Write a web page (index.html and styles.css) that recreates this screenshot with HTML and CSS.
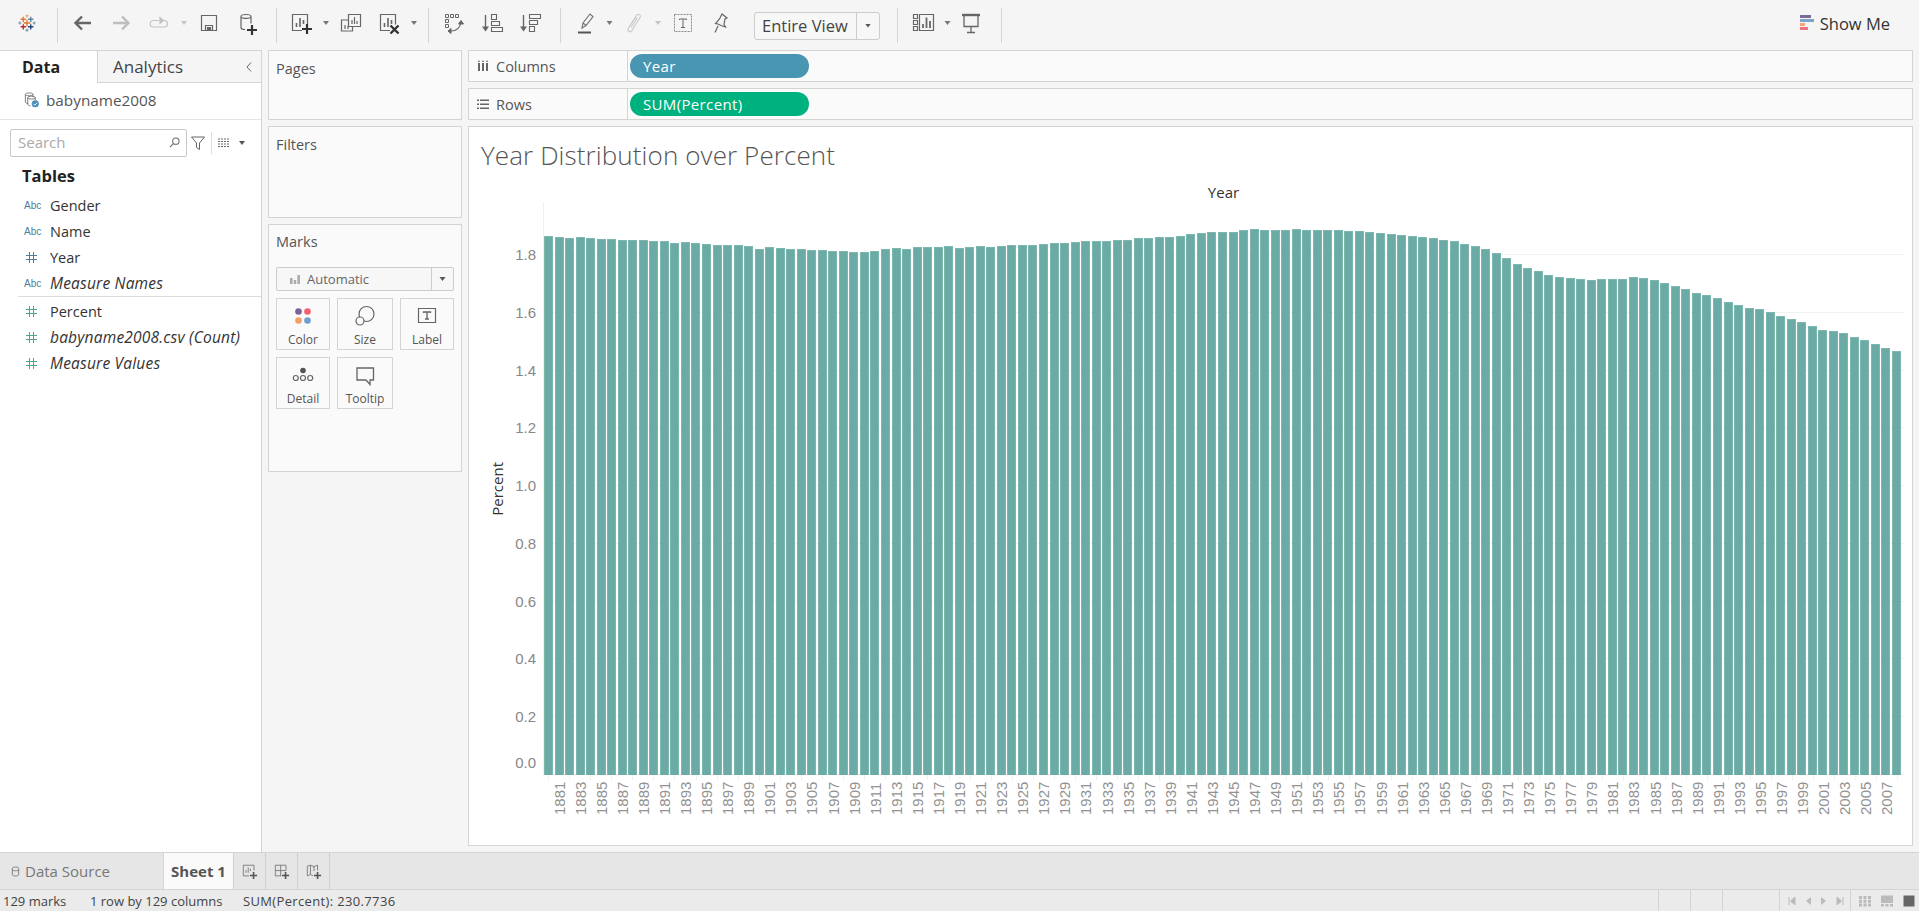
FILE: index.html
```html
<!DOCTYPE html>
<html>
<head>
  <title>Tableau - Sheet 1</title>
  <link rel="stylesheet" href="styles.css">
</head>
<body>
  <header class="toolbar">
    <div class="tb-group g-logo">
      <svg class="logo" viewBox="0 0 24 24" fill="none" stroke-width="1.500">
        <path d="M12 7.500v9M7.500 12h9" stroke="#e8762d" stroke-width="1.800"/>
        <path d="M7 3.500v7M3.500 7h7" stroke="#e8762d" stroke-width="1.800"/>
        <path d="M17 3.500v7M13.500 7h7" stroke="#59879b" stroke-width="1.800"/>
        <path d="M7 13.500v7M3.500 17h7" stroke="#c72035" stroke-width="1.800"/>
        <path d="M17 13.500v7M13.500 17h7" stroke="#1f447b" stroke-width="1.800"/>
        <path d="M12 .5v4M10 2.500h4" stroke="#e8a070"/>
        <path d="M12 19.500v4M10 21.500h4" stroke="#7099a6"/>
        <path d="M2.500 10v4M.5 12h4" stroke="#7099a6"/>
        <path d="M21.500 10v4M19.500 12h4" stroke="#7099a6"/>
      </svg>
    </div>
    <div class="tb-group g-nav">
      <span class="btn"><svg class="ico" viewBox="0 0 24 24" fill="none" stroke="#666" stroke-width="2.400"><path d="M20 12H5M11 5.500L4.500 12l6.500 6.500"/></svg></span>
      <span class="btn"><svg class="ico" viewBox="0 0 24 24" fill="none" stroke="#bdbdbd" stroke-width="2.400"><path d="M4 12h15M13 5.500l6.500 6.500-6.500 6.500"/></svg></span>
      <span class="btn"><svg class="ico" viewBox="0 0 24 24" fill="none" stroke="#c4c4c4" stroke-width="1.200"><path d="M12 9.500H6.500a3 3 0 0 0 0 6.500h11a3 3 0 0 0 3-3.200c0-1.800-1.300-3.300-3-3.300H16"/><path d="M13 6.500v6l3.500-3z" fill="#c4c4c4"/></svg></span>
      <span class="caret off"></span>
      <span class="btn"><svg class="ico" viewBox="0 0 24 24" fill="none" stroke="#666" stroke-width="1.200"><path d="M4.500 4.500h15v15h-15z"/><path d="M8.500 19.500v-5h7v5"/><path d="M10.500 19.500v-3h3v3z" fill="#666"/></svg></span>
      <span class="btn"><svg class="ico" viewBox="0 0 24 24" fill="none" stroke="#666" stroke-width="1.200"><path d="M6 5.500c0-2.700 10-2.700 10 0v7M6 5.500c0 2.500 10 2.500 10 0M6 5.500v11c0 1.500 2 2 4 2"/><path d="M12 19h10M17 14v10" stroke="#333" stroke-width="2.200"/></svg></span>
    </div>
    <div class="tb-group g-sheet">
      <span class="btn"><svg class="ico" viewBox="0 0 24 24" fill="none" stroke="#666" stroke-width="1.200"><path d="M13 19.500H3.500v-16h15v10"/><path d="M7.500 16v-4M11 16V7M14.500 13V9" stroke-width="1.600"/><path d="M13 18h10M18 13v10" stroke="#333" stroke-width="2.200"/></svg></span>
      <span class="caret"></span>
      <span class="btn"><svg class="ico" viewBox="0 0 24 24" fill="none" stroke="#666" stroke-width="1.200"><path d="M9.500 3.500h12v12h-12z"/><path d="M9 9H2.500v11h11v-4"/><path d="M13 13V9M15.500 13V6M18 13v-3M6 18v-4M9 18v-3"/></svg></span>
      <span class="btn"><svg class="ico" viewBox="0 0 24 24" fill="none" stroke="#666" stroke-width="1.200"><path d="M13 19.500H3.500v-16h15v10"/><path d="M7.500 16v-4M11 16V7M14.500 13V9" stroke-width="1.600"/><path d="M13.500 14.500l8 8M21.500 14.500l-8 8" stroke="#333" stroke-width="2.400"/></svg></span>
      <span class="caret"></span>
    </div>
    <div class="tb-group g-sort">
      <span class="btn"><svg class="ico" viewBox="0 0 24 24" fill="none" stroke="#666" stroke-width="1"><path d="M3.500 3.500h3v3h-3zM8.500 3.500h3v3h-3zM13.500 3.500h3v3h-3zM3.500 8.500h3v3h-3zM3.500 13.500h3v3h-3z"/><path d="M9 20c5 0 9-3 10-9" stroke-width="1.200"/><path d="M16.500 13l2.500-3.500 2.500 3.500zM9 17.500v5l-3-2.500z" fill="#666"/></svg></span>
      <span class="btn"><svg class="ico" viewBox="0 0 24 24" fill="none" stroke="#666" stroke-width="1.100"><path d="M5.500 4v15" stroke-width="1.400"/><path d="M2 15.500l3.500 5 3.500-5z" fill="#666" stroke="none"/><path d="M11.500 3.500h5v5h-5zM11.500 10.500h8v4h-8zM11.500 16.500h11v4h-11z"/></svg></span>
      <span class="btn"><svg class="ico" viewBox="0 0 24 24" fill="none" stroke="#666" stroke-width="1.100"><path d="M5.500 4v15" stroke-width="1.400"/><path d="M2 15.500l3.500 5 3.500-5z" fill="#666" stroke="none"/><path d="M11.500 3.500h11v4h-11zM11.500 9.500h8v4h-8zM11.500 15.500h5v5h-5z"/></svg></span>
    </div>
    <div class="tb-group g-format">
      <span class="btn"><svg class="ico" viewBox="0 0 24 24" fill="none" stroke="#777" stroke-width="1.200"><path d="M8 17l1-5 7-9 3 2.500-7 9z"/><path d="M9 12l3 2.500"/><path d="M4 21.500h13" stroke="#555" stroke-width="2"/></svg></span>
      <span class="caret narrow"></span>
      <span class="btn"><svg class="ico" viewBox="0 0 24 24" fill="none" stroke="#c8c8c8" stroke-width="1.100"><path d="M8 16L15.500 4.500c1.800-2.500 5-.5 3.500 2L11 19.500c-1.500 2.500-5 1-3.800-2L14 7.500c.7-1 2-.3 1.500.7L10 16.500"/></svg></span>
      <span class="caret off"></span>
      <span class="btn"><svg class="ico" viewBox="0 0 24 24" fill="none" stroke="#888" stroke-width="1"><path d="M3.500 3.500h17v17h-17z" stroke-dasharray="2 1"/><path d="M8.500 9V8h7v1M12 8v8.500M10 16.500h4" stroke="#666"/></svg></span>
      <span class="btn"><svg class="ico" viewBox="0 0 24 24" fill="none" stroke="#666" stroke-width="1.200"><path d="M13 3l5 4-2 1-1 5.500 1.500 2.500-4.500-1.500-3-1.500-2.500-.5 4-4.500z"/><path d="M9 15l-3 6.500"/></svg></span>
      <div class="fit-select">
        <span class="fit-text">Entire View</span>
        <span class="fit-arrow"><span class="caret dark"></span></span>
      </div>
    </div>
    <div class="tb-group g-show">
      <span class="btn"><svg class="ico" viewBox="0 0 24 24" fill="none" stroke="#666" stroke-width="1.200"><path d="M1.500 3.500h4v4h-4zM1.500 9.500h4v4h-4zM1.500 15.500h4v4h-4zM7.500 3.500h14v16h-14z"/><path d="M11 17v-4M14.500 17V6.500M18 17v-7" stroke-width="1.800"/></svg></span>
      <span class="caret narrow"></span>
      <span class="btn"><svg class="ico" viewBox="0 0 24 24" fill="none" stroke="#666" stroke-width="1.300"><path d="M3 4h18" stroke-width="2.400"/><path d="M5 4.500v11h14v-11M12 15.500v6M8 21.500h8"/></svg></span>
    </div>
    <div class="show-me">
      <svg class="show-ico" viewBox="0 0 14 16">
        <rect x="0" y="0" width="11" height="3" fill="#7b6b98"/>
        <rect x="0" y="4" width="14" height="3" fill="#7ba3cc"/>
        <rect x="0" y="8" width="5" height="3" fill="#f2a477"/>
        <rect x="0" y="12" width="8" height="3" fill="#f5707e"/>
      </svg>
      Show Me
    </div>
  </header>

  <main class="workspace">
    <aside class="data-pane">
      <div class="pane-tabs">
        <div class="pane-tab active">Data</div>
        <div class="pane-tab">Analytics<svg class="collapse" viewBox="0 0 8 12" fill="none" stroke="#666"><path d="M6 1.500L2 6l4 4.500"/></svg></div>
      </div>
      <div class="source-row">
        <svg class="source-ico" viewBox="0 0 18 18" fill="none" stroke="#777"><path d="M2.500 3c0-2 8-2 8 0v3M2.500 3c0 2 8 2 8 0M2.500 3v8c0 1 1 1.500 3 1.800"/><path d="M5 6.500c0-2 8-2 8 0v3M5 6.500c0 2 8 2 8 0M5 6.500v7c0 1 1.500 1.500 3 1.800"/><circle cx="13" cy="13" r="3.800" fill="#4b8eb8" stroke="none"/><path d="M11 13l1.500 1.500L15 12" stroke="#fff"/></svg>
        babyname2008
      </div>
      <div class="search-row">
        <div class="search-box">
          <span>Search</span>
          <svg class="search-ico" viewBox="0 0 12 12" fill="none" stroke="#666" stroke-width="1.100"><circle cx="7.500" cy="4.500" r="3.500"/><path d="M5 7l-4 4"/></svg>
        </div>
        <svg class="filter-ico" viewBox="0 0 14 14" fill="none" stroke="#666"><path d="M.5 1h13L8.500 7v6.500l-3-2V7z"/></svg>
        <span class="vsep"></span>
        <svg class="list-ico" viewBox="0 0 12 10" fill="none" stroke="#666"><path d="M0 1h12M0 3.500h12M0 6h12M0 8.500h12" stroke-dasharray="2 1"/></svg>
        <span class="caret dark"></span>
      </div>
      <h3 class="tables-head">Tables</h3>
      <ul class="field-list">
        <li class="field"><span class="type abc">Abc</span>Gender</li>
        <li class="field"><span class="type abc">Abc</span>Name</li>
        <li class="field"><svg class="hash" viewBox="0 0 11 11" fill="none" stroke="#4a7f9c"><path d="M3.500 0v11M7.500 0v11M0 3.500h11M0 7.500h11"/></svg>Year</li>
        <li class="field calc"><span class="type abc">Abc</span>Measure Names</li>
      </ul>
      <ul class="field-list measures">
        <li class="field"><svg class="hash" viewBox="0 0 11 11" fill="none" stroke="#4ea58c"><path d="M3.500 0v11M7.500 0v11M0 3.500h11M0 7.500h11"/></svg>Percent</li>
        <li class="field calc"><svg class="hash" viewBox="0 0 11 11" fill="none" stroke="#4ea58c"><path d="M3.500 0v11M7.500 0v11M0 3.500h11M0 7.500h11"/></svg>babyname2008.csv (Count)</li>
        <li class="field calc"><svg class="hash" viewBox="0 0 11 11" fill="none" stroke="#4ea58c"><path d="M3.500 0v11M7.500 0v11M0 3.500h11M0 7.500h11"/></svg>Measure Values</li>
      </ul>
    </aside>

    <section class="cards">
      <div class="card pages">Pages</div>
      <div class="card filters">Filters</div>
      <div class="card marks">
        <div class="marks-title">Marks</div>
        <div class="mark-type">
          <svg class="auto-ico" viewBox="0 0 10 10"><path d="M0 4h2.500v6H0zM3.700 6h2.500v4H3.700zM7.400 1h2.500v9H7.400z" fill="#aaa"/></svg>
          <span class="mark-name">Automatic</span>
          <span class="mark-arrow"><span class="caret dark"></span></span>
        </div>
        <div class="mark-grid">
          <div class="mark-btn">
            <svg class="ico" viewBox="0 0 24 24"><circle cx="7.500" cy="7.500" r="3.300" fill="#7b6495"/><circle cx="16.500" cy="7.500" r="3.300" fill="#f2606e"/><circle cx="7.500" cy="16.500" r="3.300" fill="#f2a066"/><circle cx="16.500" cy="16.500" r="3.300" fill="#6e9fd0"/></svg>
            Color
          </div>
          <div class="mark-btn">
            <svg class="ico" viewBox="0 0 24 24" fill="none" stroke="#666" stroke-width="1.200"><circle cx="13.500" cy="10" r="7.500"/><circle cx="7" cy="17" r="4" fill="#fafafa"/></svg>
            Size
          </div>
          <div class="mark-btn">
            <svg class="ico" viewBox="0 0 24 24" fill="none" stroke="#666" stroke-width="1.200"><path d="M3.500 4.500h17v14h-17z"/><path d="M8.500 9V8h7v1M12 8v7M10 15h4" stroke-width="1.300"/></svg>
            Label
          </div>
          <div class="mark-btn">
            <svg class="ico" viewBox="0 0 24 24" fill="none" stroke="#666" stroke-width="1.200"><circle cx="12" cy="7.500" r="2.800" fill="#555" stroke="none"/><circle cx="4.800" cy="15" r="2.500"/><circle cx="12" cy="15" r="2.500"/><circle cx="19.200" cy="15" r="2.500"/></svg>
            Detail
          </div>
          <div class="mark-btn">
            <svg class="ico" viewBox="0 0 24 24" fill="none" stroke="#666" stroke-width="1.300"><path d="M4 5h16.500v12h-3.500v4.500l-4-4.500H4z"/></svg>
            Tooltip
          </div>
        </div>
      </div>
    </section>

    <section class="sheet">
      <div class="shelf">
        <div class="shelf-name"><svg class="shelf-ico" viewBox="0 0 12 12"><path d="M1 3h2v8H1zM5 3h2v8H5zM9 3h2v8H9zM1 .8h2v1H1zM5 .8h2v1H5zM9 .8h2v1H9z" fill="#666"/></svg>Columns</div>
        <div class="pill blue">Year</div>
      </div>
      <div class="shelf">
        <div class="shelf-name"><svg class="shelf-ico" viewBox="0 0 12 12"><path d="M0 1.500h2v1.500H0zM3 1.500h9v1.500H3zM0 5.500h2v1.500H0zM3 5.500h9v1.500H3zM0 9.500h2v1.500H0zM3 9.500h9v1.500H3z" fill="#666"/></svg>Rows</div>
        <div class="pill green">SUM(Percent)</div>
      </div>
      <div class="view">
        <h1 class="view-title">Year Distribution over Percent</h1>
        <div class="x-title">Year</div>
        <div class="chart">
          <div class="y-title"><span>Percent</span></div>
          <div class="y-axis">
            <span>1.8</span><span>1.6</span><span>1.4</span><span>1.2</span><span>1.0</span><span>0.8</span><span>0.6</span><span>0.4</span><span>0.2</span><span class="zero">0.0</span>
          </div>
          <div class="plot-col">
            <div class="plot">
              <div class="bars">
                <i style="height:539px"></i><i style="height:538px"></i><i style="height:537px"></i><i style="height:538px"></i><i style="height:537px"></i><i style="height:536px"></i><i style="height:536px"></i><i style="height:535px"></i><i style="height:535px"></i><i style="height:535px"></i><i style="height:534px"></i><i style="height:534px"></i><i style="height:532px"></i><i style="height:533px"></i><i style="height:532px"></i><i style="height:531px"></i><i style="height:530px"></i><i style="height:530px"></i><i style="height:530px"></i><i style="height:529px"></i><i style="height:526px"></i><i style="height:528px"></i><i style="height:527px"></i><i style="height:526px"></i><i style="height:526px"></i><i style="height:525px"></i><i style="height:525px"></i><i style="height:524px"></i><i style="height:524px"></i><i style="height:523px"></i><i style="height:523px"></i><i style="height:524px"></i><i style="height:526px"></i><i style="height:527px"></i><i style="height:526px"></i><i style="height:528px"></i><i style="height:528px"></i><i style="height:528px"></i><i style="height:529px"></i><i style="height:527px"></i><i style="height:528px"></i><i style="height:529px"></i><i style="height:528px"></i><i style="height:529px"></i>
                <i style="height:530px"></i><i style="height:530px"></i><i style="height:530px"></i><i style="height:531px"></i><i style="height:532px"></i><i style="height:532px"></i><i style="height:533px"></i><i style="height:534px"></i><i style="height:534px"></i><i style="height:534px"></i><i style="height:535px"></i><i style="height:535px"></i><i style="height:537px"></i><i style="height:537px"></i><i style="height:538px"></i><i style="height:538px"></i><i style="height:539px"></i><i style="height:541px"></i><i style="height:542px"></i><i style="height:543px"></i><i style="height:543px"></i><i style="height:543px"></i><i style="height:545px"></i><i style="height:546px"></i><i style="height:545px"></i><i style="height:545px"></i><i style="height:545px"></i><i style="height:546px"></i><i style="height:545px"></i><i style="height:545px"></i><i style="height:545px"></i><i style="height:545px"></i><i style="height:544px"></i><i style="height:544px"></i><i style="height:543px"></i><i style="height:542px"></i><i style="height:541px"></i><i style="height:540px"></i><i style="height:539px"></i><i style="height:538px"></i><i style="height:537px"></i><i style="height:535px"></i><i style="height:534px"></i>
                <i style="height:531px"></i><i style="height:529px"></i><i style="height:526px"></i><i style="height:522px"></i><i style="height:517px"></i><i style="height:511px"></i><i style="height:507px"></i><i style="height:504px"></i><i style="height:500px"></i><i style="height:498px"></i><i style="height:497px"></i><i style="height:496px"></i><i style="height:495px"></i><i style="height:496px"></i><i style="height:496px"></i><i style="height:496px"></i><i style="height:498px"></i><i style="height:497px"></i><i style="height:495px"></i><i style="height:492px"></i><i style="height:489px"></i><i style="height:486px"></i><i style="height:482px"></i><i style="height:480px"></i><i style="height:477px"></i><i style="height:473px"></i><i style="height:470px"></i><i style="height:467px"></i><i style="height:466px"></i><i style="height:463px"></i><i style="height:459px"></i><i style="height:456px"></i><i style="height:453px"></i><i style="height:449px"></i><i style="height:445px"></i><i style="height:444px"></i><i style="height:442px"></i><i style="height:438px"></i><i style="height:435px"></i><i style="height:431px"></i><i style="height:427px"></i><i style="height:424px"></i>
              </div>
            </div>
            <div class="ticks"></div>
            <div class="x-axis">
              <span>1881</span><span>1883</span><span>1885</span><span>1887</span><span>1889</span><span>1891</span><span>1893</span><span>1895</span><span>1897</span><span>1899</span><span>1901</span><span>1903</span><span>1905</span><span>1907</span><span>1909</span><span>1911</span><span>1913</span><span>1915</span><span>1917</span><span>1919</span><span>1921</span><span>1923</span><span>1925</span><span>1927</span><span>1929</span><span>1931</span><span>1933</span><span>1935</span><span>1937</span><span>1939</span><span>1941</span><span>1943</span><span>1945</span><span>1947</span><span>1949</span><span>1951</span><span>1953</span><span>1955</span><span>1957</span><span>1959</span><span>1961</span><span>1963</span><span>1965</span><span>1967</span><span>1969</span><span>1971</span><span>1973</span><span>1975</span><span>1977</span><span>1979</span><span>1981</span><span>1983</span><span>1985</span><span>1987</span><span>1989</span><span>1991</span><span>1993</span><span>1995</span><span>1997</span><span>1999</span><span>2001</span><span>2003</span><span>2005</span><span>2007</span>
            </div>
          </div>
        </div>
      </div>
    </section>
  </main>

  <nav class="sheet-tabs">
    <div class="tab source-tab">
      <svg class="tab-cyl" viewBox="0 0 10 12" fill="none" stroke="#777"><path d="M1.500 2.500c0-2 7-2 7 0v7c0 2-7 2-7 0zM1.500 4c0 1.500 7 1.500 7 0"/></svg>
      Data Source
    </div>
    <div class="tab current">Sheet 1</div>
    <div class="tab add"><svg class="ico-add" viewBox="0 0 18 18" fill="none" stroke="#777"><path d="M8 14.500H1.500v-12h12v6"/><path d="M4.500 11V8M7 11V5M9.500 9V6.500"/><path d="M9 14h8M13 10v8" stroke="#555" stroke-width="1.800"/></svg></div>
    <div class="tab add"><svg class="ico-add" viewBox="0 0 18 18" fill="none" stroke="#777"><path d="M8 14.500H1.500v-12h12v6M1.500 8.500h12M7.500 2.500v12"/><path d="M9 14h8M13 10v8" stroke="#555" stroke-width="1.800"/></svg></div>
    <div class="tab add"><svg class="ico-add" viewBox="0 0 18 18" fill="none" stroke="#777"><path d="M8 14.500l-3-1.500-3.500 1.500v-11L5 2.500l4 1.500 4-1.500v6M5 2.500v10.500M9 4v5"/><path d="M9 14h8M13 10v8" stroke="#555" stroke-width="1.800"/></svg></div>
  </nav>

  <footer class="status">
    <span class="stat s-marks">129 marks</span>
    <span class="stat s-dims">1 row by 129 columns</span>
    <span class="stat s-sum">SUM(Percent): 230.7736</span>
    <div class="stat-cells">
      <span class="cell c1"></span>
      <span class="cell c1"></span>
      <span class="cell c2"></span>
      <span class="cell c3">
        <svg class="nav-ico" viewBox="0 0 8 10"><path d="M1 1v8M7 1L2.500 5 7 9z" fill="#bbb" stroke="#bbb"/></svg>
        <svg class="nav-ico" viewBox="0 0 8 10"><path d="M7 1L2 5l5 4z" fill="#bbb"/></svg>
        <svg class="nav-ico" viewBox="0 0 8 10"><path d="M1 1l5 4-5 4z" fill="#bbb"/></svg>
        <svg class="nav-ico" viewBox="0 0 8 10"><path d="M7 1v8M1 1l4.500 4L1 9z" fill="#bbb" stroke="#bbb"/></svg>
      </span>
      <span class="cell c4">
        <svg class="view-ico" viewBox="0 0 12 12" fill="#bbb"><path d="M0 1h3v3H0zM4.500 1h3v3h-3zM9 1h3v3H9zM0 4.700h3v3H0zM4.500 4.700h3v3h-3zM9 4.700h3v3H9zM0 8.400h3v3H0zM4.500 8.400h3v3h-3zM9 8.400h3v3H9z"/></svg>
        <svg class="view-ico" viewBox="0 0 12 12" fill="#bbb"><path d="M0 .5h12v7.500H0zM0 9h3v2.500H0zM4.500 9h3v2.500h-3zM9 9h3v2.500H9z"/></svg>
        <svg class="view-ico" viewBox="0 0 12 12" fill="#666"><path d="M.5.500h11v11H.5z"/></svg>
      </span>
    </div>
  </footer>
</body>
</html>
```

FILE: styles.css
```css
* {
  box-sizing: border-box;
}
html, body {
  height: 100%;
}
body {
  margin: 0;
  overflow: hidden;
  background: #f5f5f5;
  color: #444;
  font-family: 'Open Sans', 'Liberation Sans', sans-serif;
  font-size: 14px;
}
ul {
  list-style: none;
  margin: 0;
  padding: 0;
}

/* toolbar */
.toolbar {
  display: flex;
  height: 50px;
  padding-top: 8px;
  background: #f5f5f5;
}
.tb-group {
  display: flex;
  align-items: center;
  height: 35px;
  padding-bottom: 5px;
  border-right: 1px solid #d4d4d4;
}
.g-logo { width: 58px; padding-left: 18px; }
.g-nav { padding-left: 6px; padding-right: 10px; }
.g-sheet { padding-left: 5px; padding-right: 8px; }
.g-sort { padding-left: 6px; padding-right: 11px; }
.g-format { padding-left: 6px; padding-right: 17px; }
.g-show { padding-left: 7px; padding-right: 11px; }
.logo {
  display: block;
  width: 18px;
  height: 18px;
}
.ico {
  display: block;
  width: 24px;
  height: 24px;
}
.btn {
  display: flex;
  justify-content: center;
  width: 38px;
}
.caret {
  display: block;
  width: 12px;
  height: 4px;
  background: #777;
  clip-path: polygon(3px 0, 9px 0, 6px 4px);
}
.caret.off { background: #c4c4c4; }
.caret.narrow { width: 9px; clip-path: polygon(1.500px 0, 7.500px 0, 4.500px 4px); }
.caret.dark { background: #555; }
.fit-select {
  display: flex;
  width: 126px;
  height: 28px;
  margin-left: 14px;
  margin-top: 5px;
  background: #f7f7f7;
  border: 1px solid #ccc;
  border-radius: 3px;
  color: #444;
  font-size: 16.500px;
}
.fit-text {
  flex: 1;
  padding-left: 7px;
  line-height: 25px;
  border-right: 1px solid #ccc;
}
.fit-arrow {
  display: flex;
  align-items: center;
  justify-content: center;
  width: 22px;
}
.show-me {
  display: flex;
  align-items: center;
  height: 30px;
  margin-left: auto;
  padding-right: 29px;
  gap: 6px;
  color: #333;
  font-size: 16.500px;
}
.show-ico {
  width: 14px;
  height: 16px;
}

/* main area */
.workspace {
  display: flex;
  height: 802px;
}
.data-pane {
  width: 262px;
  background: #fff;
  border-top: 1px solid #d4d4d4;
  border-right: 1px solid #d4d4d4;
}
.pane-tabs {
  display: flex;
  height: 32px;
}
.pane-tab {
  display: flex;
  flex: 1;
  align-items: center;
  padding-left: 15px;
  background: #f5f5f5;
  border-bottom: 1px solid #d4d4d4;
  border-left: 1px solid #d4d4d4;
  font-size: 17px;
}
.pane-tab.active {
  flex: 0 0 97px;
  padding-left: 22px;
  background: #fff;
  border: 0;
  color: #222;
  font-size: 16px;
  font-weight: 700;
}
.collapse {
  width: 8px;
  height: 12px;
  margin-left: auto;
  margin-right: 8px;
}
.source-row {
  display: flex;
  align-items: center;
  gap: 6px;
  height: 37px;
  padding-left: 23px;
  padding-bottom: 3px;
  border-bottom: 1px solid #e4e4e4;
  font-size: 15.300px;
  color: #555;
}
.source-ico {
  width: 17px;
  height: 18px;
}
.search-row {
  display: flex;
  align-items: center;
  height: 28px;
  margin-top: 9px;
  padding-left: 10px;
}
.search-box {
  display: flex;
  align-items: center;
  justify-content: space-between;
  width: 177px;
  height: 28px;
  padding: 0 6px 2px 7px;
  background: #fff;
  border: 1px solid #c8c8c8;
  border-radius: 2px;
  color: #aaa;
  font-size: 15px;
}
.search-ico {
  width: 11px;
  height: 11px;
}
.filter-ico {
  width: 14px;
  height: 14px;
  margin-left: 4px;
}
.vsep {
  width: 1px;
  height: 22px;
  margin: 0 6px;
  background: #ddd;
}
.list-ico {
  width: 12px;
  height: 10px;
  margin-right: 6px;
}
.tables-head {
  margin: 9px 0 0;
  padding-left: 22px;
  color: #222;
  font-size: 16.500px;
  line-height: 20px;
  font-weight: 700;
}
.field-list {
  margin-top: 6px;
}
.field-list.measures {
  margin: 0 0 0 18px;
  padding-top: 1px;
  border-top: 1px solid #dcdcdc;
}
.field {
  display: flex;
  align-items: center;
  height: 26px;
  padding-left: 24px;
  color: #333;
  font-size: 14.500px;
}
.measures .field {
  padding-left: 6px;
}
.field.calc {
  font-style: italic;
  font-size: 15.500px;
  letter-spacing: 0.200px;
}
.type {
  width: 26px;
  font-style: normal;
  letter-spacing: 0;
  color: #4a7f9c;
  font-size: 10px;
  font-family: 'Liberation Sans', sans-serif;
}
.hash {
  width: 11px;
  height: 11px;
  margin: 0 13px 0 2px;
}

/* pages, filters, marks */
.cards {
  display: flex;
  flex-direction: column;
  gap: 6px;
  width: 194px;
  margin-left: 6px;
}
.card {
  padding: 8px 7px;
  background: #fafafa;
  border: 1px solid #d4d4d4;
  color: #555;
  font-size: 14.500px;
}
.pages { height: 70px; }
.filters { height: 92px; }
.marks { height: 248px; }
.marks-title {
  line-height: 18px;
}
.mark-type {
  display: flex;
  align-items: center;
  height: 24px;
  margin-top: 16px;
  background: #f7f7f7;
  border: 1px solid #ccc;
  border-radius: 2px;
  color: #666;
  font-size: 13px;
}
.auto-ico {
  width: 10px;
  height: 10px;
  margin-left: 13px;
  margin-right: 7px;
}
.mark-name {
  flex: 1;
}
.mark-arrow {
  display: flex;
  align-items: center;
  justify-content: center;
  width: 22px;
  height: 100%;
  border-left: 1px solid #ccc;
}
.mark-grid {
  display: grid;
  grid-template-columns: 54px 56px 54px;
  gap: 7px 7px;
  margin-top: 7px;
}
.mark-btn {
  display: flex;
  flex-direction: column;
  align-items: center;
  gap: 3px;
  height: 52px;
  padding-top: 5px;
  border: 1px solid #d4d4d4;
  background: #fafafa;
  color: #555;
  font-size: 12px;
}

/* shelves and view */
.sheet {
  display: flex;
  flex-direction: column;
  gap: 6px;
  flex: 1;
  margin: 0 6px;
}
.shelf {
  display: flex;
  align-items: center;
  height: 32px;
  background: #fafafa;
  border: 1px solid #d4d4d4;
}
.shelf-name {
  display: flex;
  align-items: center;
  gap: 7px;
  width: 159px;
  height: 100%;
  padding-left: 8px;
  border-right: 1px solid #d4d4d4;
  color: #555;
  font-size: 14.500px;
}
.shelf-ico {
  width: 12px;
  height: 12px;
}
.pill {
  width: 179px;
  height: 24px;
  margin-left: 2px;
  padding-left: 13px;
  border-radius: 12px;
  color: #fff;
  font-size: 15px;
  font-weight: 500;
  letter-spacing: 0.350px;
  line-height: 24px;
}
.pill.blue { background: #4996b2; }
.pill.green { background: #00b180; }
.view {
  height: 720px;
  background: #fff;
  border: 1px solid #d4d4d4;
}
.view-title {
  margin: 12px 0 0 12px;
  color: #555;
  font-size: 26px;
  letter-spacing: 0.100px;
  line-height: 32px;
  font-weight: 300;
}
.x-title {
  width: 1361px;
  margin: 11px 0 0 74px;
  color: #333;
  font-size: 15px;
  line-height: 20px;
  text-align: center;
}
.chart {
  display: flex;
}
.y-title {
  display: flex;
  align-items: center;
  justify-content: center;
  width: 41px;
  height: 573px;
  padding-left: 14px;
  color: #333;
  font-size: 15px;
}
.y-title span {
  writing-mode: vertical-rl;
  transform: rotate(180deg);
}
.y-axis {
  display: flex;
  flex-direction: column;
  width: 26px;
  margin-right: 7px;
  padding-top: 24px;
  color: #888;
  font-family: 'Liberation Sans', sans-serif;
  font-size: 15px;
  text-align: right;
}
.y-axis span {
  height: 57.780px;
  line-height: 57.780px;
}
.y-axis .zero {
  margin-top: -12px;
}
.plot {
  width: 1361px;
  height: 573px;
  border-left: 1px solid #f0f0f0;
  background: repeating-linear-gradient(to top, #f1f1f1 0 1px, transparent 1px 57.780px);
}
.bars {
  display: flex;
  align-items: flex-end;
  gap: 1.540px;
  width: 1358px;
  height: 100%;
}
.bars i {
  flex: 1;
  background: #6caba5;
  border: 1px solid #7ab8b0;
  border-bottom: 0;
}
.ticks {
  width: 1361px;
  height: 5px;
  background: repeating-linear-gradient(to right, transparent 0 5px, #f0f0f0 5px 6px, transparent 6px 21.080px);
}
.x-axis {
  display: flex;
  height: 35px;
  margin-top: 1px;
  padding-left: 5.500px;
  color: #929292;
  font-family: 'Liberation Sans', sans-serif;
  font-size: 15px;
}
.x-axis span {
  flex: 0 0 21.080px;
  text-align: center;
  line-height: 21.080px;
  writing-mode: vertical-rl;
  transform: rotate(180deg);
}

/* bottom tabs and status */
.sheet-tabs {
  display: flex;
  height: 38px;
  background: #e6e6e6;
  border-top: 1px solid #d4d4d4;
  border-bottom: 1px solid #d4d4d4;
}
.tab {
  display: flex;
  align-items: center;
  border-right: 1px solid #d0d0d0;
}
.source-tab {
  gap: 5px;
  width: 163px;
  padding-left: 11px;
  border: 0;
  color: #777;
  font-size: 15px;
}
.tab-cyl {
  width: 9px;
  height: 11px;
}
.current {
  justify-content: center;
  width: 71px;
  background: #fafafa;
  border-left: 1px solid #d4d4d4;
  color: #555;
  font-weight: 700;
  font-size: 15px;
}
.add {
  justify-content: center;
  width: 32px;
}
.ico-add {
  width: 16px;
  height: 16px;
}
.status {
  display: flex;
  align-items: center;
  height: 21px;
  padding-left: 3px;
  background: #ebebeb;
  color: #444;
  font-size: 13px;
}
.s-marks { width: 87px; }
.s-dims { width: 153px; }
.s-sum { letter-spacing: 0.350px; }
.stat-cells {
  display: flex;
  height: 100%;
  margin-left: auto;
}
.cell {
  display: flex;
  align-items: center;
  height: 100%;
  border-left: 1px solid #d4d4d4;
}
.c1 { width: 32px; }
.c2 { width: 57px; }
.c3 { width: 71px; padding-left: 8px; gap: 8px; }
.c4 { width: 69px; padding-left: 8px; gap: 10px; }
.nav-ico {
  width: 8px;
  height: 10px;
}
.view-ico {
  width: 12px;
  height: 12px;
}
```
